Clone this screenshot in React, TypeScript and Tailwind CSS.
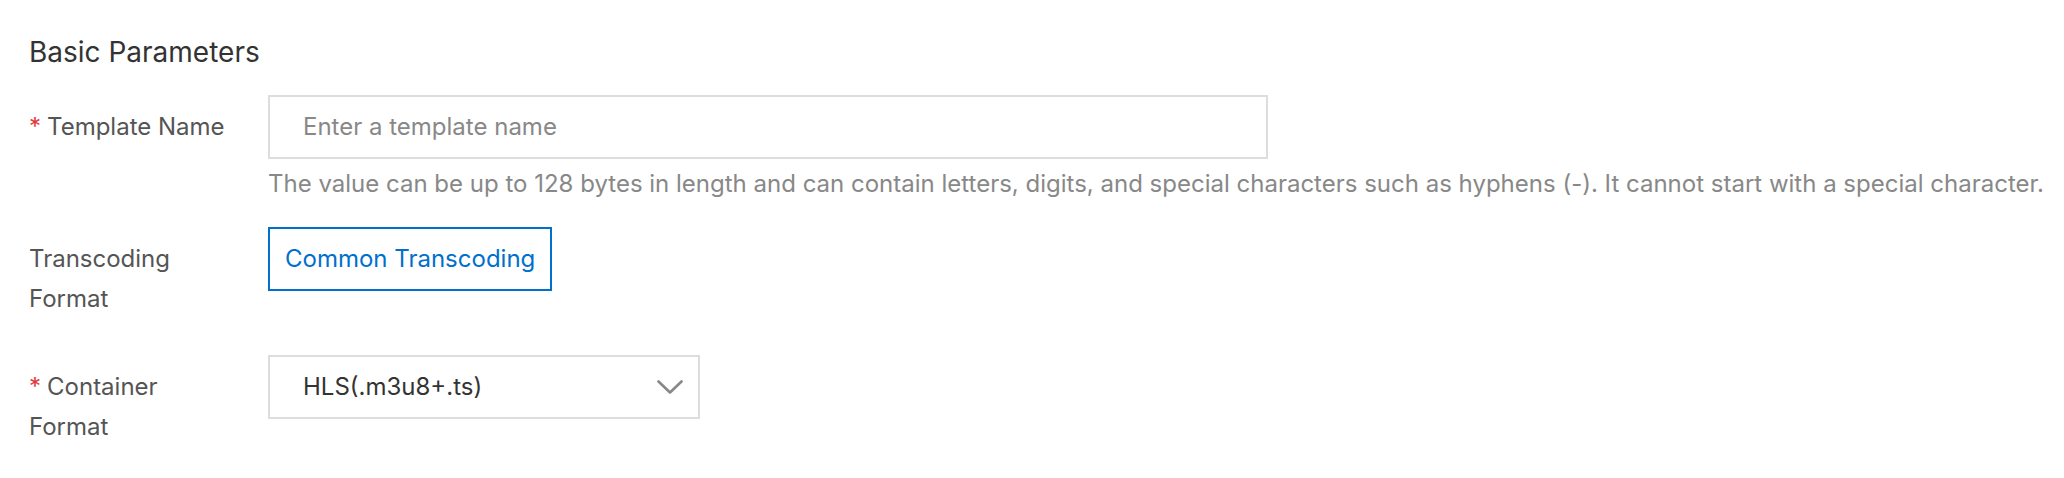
import React from "react";

export default function App() {
  return (
    <div className="w-[2064px] h-[478px] bg-white pl-[29px] font-['Inter','Liberation_Sans',Arial,sans-serif]">
      <h2 className="pt-[32px] text-[28px] leading-[40px] text-[#333333]">Basic Parameters</h2>

      <div className="mt-[23px] flex">
        <div className="w-[205px] shrink-0 pt-3 text-[24px] leading-[40px] text-[#555555]">
          <span className="mr-[6px] text-[#e4393c]">*</span>Template Name
        </div>
        <div className="ml-[34px]">
          <div className="flex h-[64px] w-[1000px] items-center border-2 border-[#dddddd] bg-white pl-[33px] text-[24px] text-[#888888]">
            Enter a template name
          </div>
          <p className="mt-[5px] whitespace-nowrap text-[24px] leading-[40px] text-[#888888]">
            The value can be up to 128 bytes in length and can contain letters, digits, and special characters such as hyphens (-). It cannot start with a special character.
          </p>
        </div>
      </div>

      <div className="mt-[23px] flex">
        <div className="w-[205px] shrink-0 pt-3 text-[24px] leading-[40px] text-[#555555]">
          Transcoding
          <br />
          Format
        </div>
        <div className="ml-[34px]">
          <button className="flex h-[64px] items-center border-2 border-[#0070cc] bg-white px-[15px] text-[24px] text-[#0070cc]">
            Common Transcoding
          </button>
        </div>
      </div>

      <div className="mt-[36px] flex">
        <div className="w-[205px] shrink-0 pt-3 text-[24px] leading-[40px] text-[#555555]">
          <span className="mr-[6px] text-[#e4393c]">*</span>Container
          <br />
          Format
        </div>
        <div className="ml-[34px]">
          <div className="flex h-[64px] w-[432px] items-center justify-between border-2 border-[#dddddd] bg-white pl-[33px] pr-[15px] text-[24px] text-[#333333]">
            <span>HLS(.m3u8+.ts)</span>
            <svg width="26" height="14" viewBox="0 0 26 14" fill="none">
              <polyline points="1.5,1.5 13,12.5 24.5,1.5" stroke="#888888" strokeWidth="2.6" strokeLinecap="round" strokeLinejoin="round" />
            </svg>
          </div>
        </div>
      </div>
    </div>
  );
}
